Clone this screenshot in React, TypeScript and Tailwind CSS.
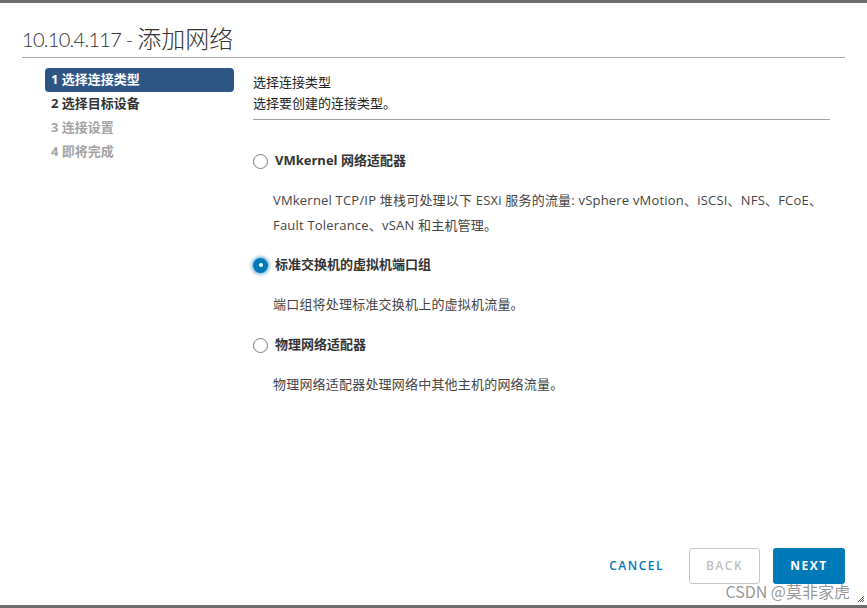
import React from 'react';

const FONT = 'font-["Open_Sans","Noto_Sans_CJK_SC",sans-serif]';

const steps = [
  { label: '1 选择连接类型', state: 'active' },
  { label: '2 选择目标设备', state: 'normal' },
  { label: '3 连接设置', state: 'disabled' },
  { label: '4 即将完成', state: 'disabled' },
];

function Radio({ checked }: { checked: boolean }) {
  if (checked) {
    return (
      <span className="flex h-[15px] w-[15px] shrink-0 items-center justify-center rounded-full bg-[#0079b8] shadow-[0_0_3px_2px_rgba(0,121,184,0.45)]">
        <span className="h-[4px] w-[4px] rounded-full bg-white" />
      </span>
    );
  }
  return <span className="h-[15px] w-[15px] shrink-0 rounded-full border border-[#7a7a7a] bg-white" />;
}

function Option({
  checked,
  label,
  desc,
  className,
}: {
  checked: boolean;
  label: string;
  desc: React.ReactNode;
  className?: string;
}) {
  return (
    <div className={className}>
      <div className="flex h-[20px] items-center gap-[7px]">
        <Radio checked={checked} />
        <span className="text-[13px] font-bold text-[#333]">{label}</span>
      </div>
      <div className="mt-[17px] pl-[20px] text-[13px] leading-[25px] tracking-[0.2px] text-[#444]">{desc}</div>
    </div>
  );
}

export default function App() {
  return (
    <div className={`relative flex h-[608px] w-[867px] flex-col overflow-hidden border-y-[3px] border-[#6d6d6d] bg-white ${FONT}`}>
      {/* Header */}
      <div className="mx-[22px] border-b border-[#a8a8a8] pt-[20px] pb-[3px]">
        <h1 className='flex h-[31px] items-center font-["Lato","Noto_Sans_CJK_SC",sans-serif] text-[24px] font-light leading-none text-[#333]'>
          <span className="text-[20px] tracking-[-0.7px] whitespace-pre">10.10.4.117 - </span>
          <span>添加网络</span>
        </h1>
      </div>

      <div className="flex flex-1 pt-[10px]">
        {/* Steps */}
        <nav className="ml-[45px] w-[189px] shrink-0">
          {steps.map((s) => (
            <div
              key={s.label}
              className={
                s.state === 'active'
                  ? 'flex h-[24px] items-center rounded-[4px] bg-[#2d5684] px-[6px] text-[13px] font-bold text-white'
                  : s.state === 'normal'
                  ? 'flex h-[24px] items-center px-[6px] text-[13px] font-bold text-[#333]'
                  : 'flex h-[24px] items-center px-[6px] text-[13px] font-bold text-[#a3a3a3]'
              }
            >
              {s.label}
            </div>
          ))}
        </nav>

        {/* Content */}
        <div className="ml-[19px] w-[577px]">
          <div className="border-b border-[#a0a0a0] pt-[4px] pb-[6px] text-[13px] leading-[20px] text-[#222]">
            <div>选择连接类型</div>
            <div className="mt-px">选择要创建的连接类型。</div>
          </div>

          <Option
            className="mt-[31px]"
            checked={false}
            label="VMkernel 网络适配器"
            desc={
              <>
                VMkernel TCP/IP 堆栈可处理以下 ESXi 服务的流量: vSphere vMotion、iSCSI、NFS、FCoE、
                <br />
                Fault Tolerance、vSAN 和主机管理。
              </>
            }
          />
          <Option
            className="mt-[17px]"
            checked={true}
            label="标准交换机的虚拟机端口组"
            desc="端口组将处理标准交换机上的虚拟机流量。"
          />
          <Option
            className="mt-[18px]"
            checked={false}
            label="物理网络适配器"
            desc="物理网络适配器处理网络中其他主机的网络流量。"
          />
        </div>
      </div>

      {/* Footer */}
      <div className="flex items-center justify-end gap-[13px] pr-[22px] pb-[21px]">
        <button className="h-[36px] px-[12px] text-[12px] font-semibold tracking-[1.5px] text-[#0079b8]">
          CANCEL
        </button>
        <button className="h-[36px] w-[71px] rounded-[3px] border border-[#c8c8c8] text-[12px] font-semibold tracking-[1.5px] text-[#c0c0c0]">
          BACK
        </button>
        <button className="h-[36px] w-[72px] rounded-[3px] bg-[#0079b8] text-[12px] font-bold tracking-[1.5px] text-white">
          NEXT
        </button>
      </div>

      {/* Watermark overlay */}
      <div className='pointer-events-none absolute right-[17px] bottom-[4px] font-["Noto_Sans_CJK_SC",sans-serif] text-[16px] leading-[20px] text-[#8a8a8a]/90'>
        CSDN @莫非家虎
      </div>
      <svg className="absolute right-[2px] bottom-[2px]" width="8" height="8" viewBox="0 0 8 8">
        <path d="M7 1 L1 7 M7 3 L3 7 M7 5 L5 7" stroke="#555" strokeWidth="1" />
      </svg>
    </div>
  );
}
